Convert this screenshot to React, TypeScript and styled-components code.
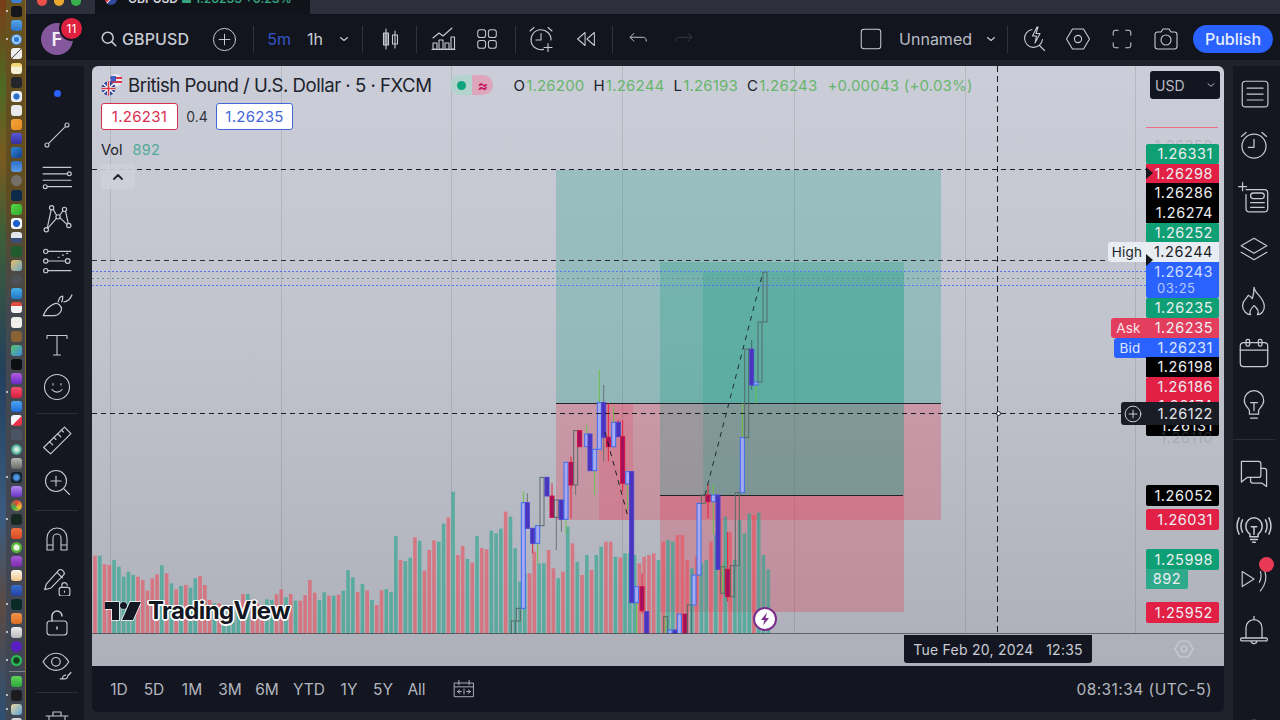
import React from "react";
import styled, { createGlobalStyle } from "styled-components";

const Global = createGlobalStyle`
  html, body {
    margin: 0;
    padding: 0;
    width: 1280px;
    height: 720px;
    overflow: hidden;
    background: #12151d;
    font-family: Inter, "Liberation Sans", sans-serif;
  }
`;

const Screen = styled.div`
  display: flex;
  width: 1280px;
  height: 720px;
  overflow: hidden;
`;

/* macOS dock on the left */
const Dock = styled.div`
  flex: 0 0 26px;
  height: 720px;
  overflow: hidden;
  display: flex;
  background: linear-gradient(180deg, #7a3d18 0%, #4d6a24 12%, #7a5a20 22%, #3f5f38 32%, #23405c 52%, #3b5c80 72%, #5b4a44 84%, #2d4f72 100%);
`;

const DockGlass = styled.div`
  margin-left: 6px;
  flex: 1;
  display: flex;
  flex-direction: column;
  align-items: center;
  gap: 3.12px;
  margin-top: -8px;
  padding-left: 2px;
  height: 740px;
  background: linear-gradient(180deg, #6a5120 0%, #5e4c22 28%, #45484f 42%, #3f4654 100%);
  border-right: 1px solid #8a6a2a;
`;

const DockIcon = styled.div<{ $bg: string; $round?: boolean; $dot?: boolean }>`
  position: relative;
  flex: 0 0 11px;
  width: 11px;
  border-radius: ${(p) => (p.$round ? "50%" : "3px")};
  background: ${(p) => p.$bg};

  &::before {
    content: "";
    display: ${(p) => (p.$dot ? "block" : "none")};
    position: absolute;
    left: -5px;
    top: 4px;
    width: 2px;
    height: 2px;
    border-radius: 50%;
    background: #e6e6e0;
  }
`;

const DockSep = styled.div`
  flex: 0 0 1px;
  width: 16px;
  margin: 1.3px 0;
  background: rgba(255, 255, 255, 0.35);
`;

const Desk = styled.div`
  flex: 1;
  min-width: 0;
  display: flex;
  flex-direction: column;
  background: #1f222b;
`;

/* browser tab strip, mostly cut off at the top */
const TabStrip = styled.div`
  flex: 0 0 14px;
  display: flex;
  background: #2d303b;
  overflow: hidden;
`;

const Lights = styled.div`
  flex: 0 0 69px;
  display: flex;
  gap: 7px;
  padding-left: 11px;
  margin-top: -4px;
  box-sizing: border-box;
`;

const Light = styled.span<{ $c: string }>`
  flex: none;
  width: 10px;
  height: 10px;
  border-radius: 50%;
  background: ${(p) => p.$c};
`;

const Tab = styled.div`
  flex: 0 0 215px;
  display: flex;
  gap: 11px;
  background: #10131a;
  color: #d6d8de;
  font-size: 12px;
  font-weight: 600;
  line-height: 12px;
  padding: 0 0 0 10px;
  box-sizing: border-box;
  height: 14px;
  white-space: nowrap;
`;

const TabFlag = styled.span`
  flex: none;
  width: 12px;
  height: 12px;
  margin-top: -7px;
  border-radius: 50%;
  background: linear-gradient(135deg, #d9364a 45%, #e8e8ee 50%, #2f4a9a 55%);
`;

const TabText = styled.span`
  margin-top: -7px;
`;

const TabGreen = styled.span`
  color: #35a47f;
`;

const Toolbar = styled.div`
  flex: 0 0 46px;
  box-sizing: border-box;
  display: flex;
  align-items: center;
  background: #12151d;
  padding: 4px 7px 0 15px;
  color: #c8cbd3;
`;

const Avatar = styled.div`
  position: relative;
  flex: 0 0 32px;
  height: 32px;
  border-radius: 50%;
  background: #84569b;
  color: #f4eef6;
  font-size: 19px;
  font-weight: 600;
  display: flex;
  align-items: center;
  justify-content: center;
`;

const Badge = styled.span`
  position: absolute;
  left: 18px;
  top: -7px;
  width: 25px;
  height: 25px;
  border-radius: 50%;
  border: 2px solid #12151d;
  box-sizing: border-box;
  background: #e0203f;
  color: #fff;
  font-size: 12px;
  font-weight: 400;
  display: flex;
  align-items: center;
  justify-content: center;
`;

const Search = styled.div`
  margin-left: 27px;
  display: flex;
  align-items: center;
  gap: 4px;
  font-size: 16px;
  font-weight: 500;
  letter-spacing: 0.1px;
`;

const Cell = styled.div<{ $w: number; $ml?: number }>`
  flex: 0 0 ${(p) => p.$w}px;
  margin-left: ${(p) => p.$ml || 0}px;
  height: 40px;
  display: flex;
  align-items: center;
  justify-content: center;
`;

const Interval = styled(Cell)<{ $active?: boolean }>`
  font-size: 16px;
  color: ${(p) => (p.$active ? "#3455c9" : "#c8cbd3")};
`;

const Divider = styled.div<{ $ml?: number }>`
  flex: 0 0 1px;
  height: 27px;
  margin-left: ${(p) => p.$ml || 0}px;
  background: #2f333e;
`;

const Grow = styled.div`
  flex: 1;
`;

const LayoutName = styled.span`
  flex: 0 0 72px;
  margin-left: 10px;
  font-size: 16px;
  color: #b9bcc5;
  white-space: nowrap;
`;

const Publish = styled.button`
  flex: 0 0 80px;
  height: 28px;
  margin-left: 5px;
  border: 0;
  padding: 0;
  border-radius: 14px;
  background: #2962ff;
  color: #e9eeff;
  font: 500 16px Inter, "Liberation Sans", sans-serif;
`;

const IconFaint = styled.span`
  color: #3a3e49;
`;

const Body = styled.div`
  flex: 1;
  min-height: 0;
  display: flex;
  margin-top: 6px;
  overflow: hidden;
`;

const LeftBar = styled.div`
  flex: 0 0 58px;
  margin-right: 8px;
  background: #141720;
  padding: 6px 0 0 4px;
  box-sizing: border-box;
  display: flex;
  flex-direction: column;
  align-items: center;
  color: #c6c9d1;
  overflow: hidden;
`;

const RightBar = styled.div`
  flex: 0 0 47px;
  margin-left: 9px;
  background: #141720;
  padding: 1px 5px 0 0;
  box-sizing: border-box;
  display: flex;
  flex-direction: column;
  align-items: center;
  color: #c6c9d1;
  overflow: hidden;
`;

const ToolCell = styled.div<{ $h: number }>`
  position: relative;
  flex: 0 0 ${(p) => p.$h}px;
  width: 100%;
  display: flex;
  align-items: center;
  justify-content: center;
`;

const BarSep = styled.div<{ $h: number }>`
  flex: 0 0 ${(p) => p.$h}px;
  width: 100%;
  display: flex;
  align-items: center;
  justify-content: center;

  &::after {
    content: "";
    width: 42px;
    height: 1px;
    background: #2a2e39;
  }
`;

const RecDot = styled.span`
  position: absolute;
  left: 26px;
  top: 5px;
  width: 15px;
  height: 15px;
  border-radius: 50%;
  background: #e83a57;
`;

const BlueDot = styled.span`
  width: 7px;
  height: 7px;
  border-radius: 50%;
  background: #2962ff;
`;

const Center = styled.div`
  flex: 0 0 1132px;
  display: flex;
  flex-direction: column;
`;

const Chart = styled.div`
  position: relative;
  flex: 0 0 600px;
  display: flex;
  flex-direction: column;
  border-radius: 6px 6px 0 0;
  overflow: hidden;
  background: linear-gradient(180deg, #cbced8 0%, #c1c4cd 45%, #adb0b9 100%);
`;

const Pane = styled.div`
  position: relative;
  flex: 0 0 568px;
`;

const PlotSvg = styled.svg`
  position: absolute;
  left: 0;
  top: 0;
  display: block;
`;

const TimeAxis = styled.div`
  position: relative;
  flex: 1;
`;

const TimeTag = styled.div`
  position: absolute;
  left: 812px;
  top: 1px;
  width: 188px;
  height: 28px;
  border-radius: 0 0 3px 3px;
  background: #131620;
  color: #c9ccd4;
  font-size: 14px;
  letter-spacing: 0.25px;
  white-space: pre;
  display: flex;
  align-items: center;
  justify-content: center;
`;

const AxisGear = styled.div`
  position: absolute;
  left: 1081px;
  top: 4px;
  color: #c8cbd2;
`;

const Legend = styled.div`
  position: absolute;
  left: 9px;
  top: 7px;
  display: flex;
  flex-direction: column;
`;

const TitleRow = styled.div`
  display: flex;
  align-items: center;
  height: 24px;
`;

const Title = styled.span`
  margin-left: 5px;
  font-size: 18.6px;
  letter-spacing: -0.5px;
  color: #20222c;
  white-space: nowrap;
`;

const Status = styled.div`
  margin-left: 19px;
  flex: 0 0 43px;
  height: 20px;
  display: flex;
  border-radius: 10px;
  overflow: hidden;
`;

const StatusHalf = styled.div<{ $bg: string; $c: string }>`
  flex: 1;
  display: flex;
  align-items: center;
  justify-content: center;
  background: ${(p) => p.$bg};
  color: ${(p) => p.$c};
  font-size: 15px;
  font-weight: 700;
`;

const StatusDot = styled.span`
  width: 9px;
  height: 9px;
  border-radius: 50%;
  background: #10a37f;
`;

const Ohlc = styled.div`
  margin-left: 20px;
  display: flex;
  gap: 9px;
  font-size: 15px;
  letter-spacing: 0.2px;
  color: #20222c;
  white-space: nowrap;
`;

const Num = styled.span`
  color: #68b56d;
  margin-left: 1px;
`;

const QuoteRow = styled.div`
  display: flex;
  align-items: center;
  margin-top: 6px;
  height: 27px;
`;

const QuoteBox = styled.div<{ $c: string }>`
  flex: 0 0 77px;
  height: 27px;
  box-sizing: border-box;
  border: 1px solid ${(p) => p.$c};
  border-radius: 3px;
  background: #fff;
  color: ${(p) => p.$c};
  font-size: 15px;
  letter-spacing: 0.3px;
  display: flex;
  align-items: center;
  justify-content: center;
`;

const Spread = styled.span`
  flex: 0 0 38px;
  text-align: center;
  font-size: 14px;
  color: #33353f;
`;

const VolRow = styled.div`
  display: flex;
  gap: 10px;
  margin-top: 11px;
  font-size: 14.5px;
  color: #20222c;
`;

const VolNum = styled.span`
  color: #52a99a;
  letter-spacing: 0.3px;
`;

const Collapse = styled.div`
  margin-top: 6px;
  width: 34px;
  height: 25px;
  display: flex;
  align-items: center;
  justify-content: center;
  border-radius: 3px;
  background: rgba(205, 208, 217, 0.9);
  color: #22242c;
`;

const CurrencySel = styled.div`
  position: absolute;
  left: 1058px;
  top: 5px;
  width: 70px;
  height: 28px;
  box-sizing: border-box;
  padding: 0 3px 0 5px;
  border-radius: 3px;
  background: #131620;
  color: #b9bcc5;
  font-size: 14px;
  display: flex;
  align-items: center;
  justify-content: space-between;
`;

const PinkLine = styled.div`
  position: absolute;
  left: 1054px;
  top: 61px;
  width: 72px;
  height: 1px;
  background: #ee6f86;
`;

const PriceTag = styled.div<{ $y: number; $bg: string; $c?: string; $h?: number; $r?: boolean }>`
  position: absolute;
  left: 1054px;
  top: ${(p) => p.$y - 66 - (p.$h || 20) / 2}px;
  width: 73px;
  height: ${(p) => p.$h || 20}px;
  box-sizing: border-box;
  padding-right: 6px;
  border-radius: ${(p) => (p.$r ? "2px" : "0")};
  background: ${(p) => p.$bg};
  color: ${(p) => p.$c || "#eceef1"};
  font-size: 14.5px;
  letter-spacing: 0.55px;
  line-height: ${(p) => p.$h || 20}px;
  text-align: right;
`;

const CountdownTag = styled(PriceTag)`
  line-height: 16px;
  padding-top: 2px;
  border-radius: 0 0 2px 2px;
`;

const Countdown = styled.div`
  text-align: left;
  padding-left: 11px;
  font-size: 13px;
  color: #b7c8fb;
`;

const VolTag = styled(PriceTag)`
  width: 42px;
  padding: 0;
  text-align: center;
  border-radius: 0 0 2px 0;
`;

const FaintPrice = styled.div<{ $y: number }>`
  position: absolute;
  left: 1054px;
  top: ${(p) => p.$y - 76}px;
  width: 67px;
  font-size: 14.5px;
  line-height: 20px;
  letter-spacing: 0.55px;
  text-align: right;
  color: rgba(120, 124, 135, 0.3);
`;

const SideTag = styled.div<{ $y: number; $w: number; $bg: string; $c: string }>`
  position: absolute;
  left: ${(p) => 1054 - p.$w}px;
  top: ${(p) => p.$y - 66 - 10}px;
  width: ${(p) => p.$w}px;
  height: 20px;
  border-radius: 3px 0 0 3px;
  background: ${(p) => p.$bg};
  color: ${(p) => p.$c};
  font-size: 13.5px;
  letter-spacing: 0.2px;
  display: flex;
  align-items: center;
  justify-content: center;
  z-index: 2;
`;

const PinMark = styled.div<{ $y: number }>`
  position: absolute;
  left: 1054px;
  top: ${(p) => p.$y - 66 - 6}px;
  width: 0;
  height: 0;
  border-top: 6px solid transparent;
  border-bottom: 6px solid transparent;
  border-left: 7px solid #14161c;
  z-index: 4;
`;

const CrossTag = styled.div`
  position: absolute;
  left: 1029px;
  top: 336px;
  width: 98px;
  height: 23px;
  box-sizing: border-box;
  padding: 0 6px 0 1px;
  border-radius: 3px 0 0 3px;
  background: #1a1d26;
  color: #e4e6ea;
  font-size: 14.5px;
  letter-spacing: 0.55px;
  display: flex;
  align-items: center;
  justify-content: space-between;
  z-index: 3;
`;

const LogoWrap = styled.div`
  position: absolute;
  left: 13px;
  top: 530px;
  display: flex;
  align-items: center;
  gap: 7px;
  color: #131722;
`;

const LogoText = styled.span`
  font-size: 24px;
  font-weight: 700;
  letter-spacing: -0.6px;
  text-shadow: 1.5px 0 #fff, -1.5px 0 #fff, 0 1.5px #fff, 0 -1.5px #fff, 1.2px 1.2px #fff, -1.2px -1.2px #fff, 1.2px -1.2px #fff, -1.2px 1.2px #fff;
`;

const BoltBadge = styled.div`
  position: absolute;
  left: 661px;
  top: 541px;
  width: 24px;
  height: 24px;
  box-sizing: border-box;
  border-radius: 50%;
  background: #fff;
  border: 2px solid #7b2d8b;
  display: flex;
  align-items: center;
  justify-content: center;
  color: #7b2d8b;
`;

const BottomBar = styled.div`
  flex: 0 0 46px;
  display: flex;
  align-items: center;
  border-radius: 0 0 6px 6px;
  background: #131620;
  color: #b2b5be;
  font-size: 15.5px;
  padding: 0 12px 0 0;
`;

const Range = styled.span<{ $w: number }>`
  flex: 0 0 ${(p) => p.$w}px;
  text-align: center;
`;

const ClockText = styled.span`
  font-size: 15.5px;
  letter-spacing: 0.45px;
  white-space: nowrap;
`;

const IconSvg = styled.svg`
  display: block;
  flex: none;
  fill: none;
  stroke: currentColor;
  stroke-width: 1.1;
  stroke-linecap: round;
  stroke-linejoin: round;
`;

const I: React.FC<{ s?: number; children: React.ReactNode }> = ({ s = 28, children }) => (
  <IconSvg width={s} height={s} viewBox="0 0 28 28">
    {children}
  </IconSvg>
);

const Chevron = ({ s = 14 }: { s?: number }) => (
  <IconSvg width={s} height={s} viewBox="0 0 14 14">
    <path d="M3.5 5.5 7 8.5l3.5-3" />
  </IconSvg>
);

const Flags = () => (
  <svg width="22" height="24" viewBox="0 0 22 24">
    <circle cx="14.5" cy="7.5" r="6.5" fill="#e8e8ee" />
    <path d="M9 4h12v2H9zM8 8h13v2H8z" fill="#d9364a" />
    <path d="M9.5 3h5.5v5.5H9.5z" fill="#3e5fc4" />
    <circle cx="7.5" cy="15.5" r="7" fill="#2f4a9a" />
    <path d="M2 10.5 13 20.5M13 10.5 2 20.5" stroke="#f1f1f5" strokeWidth="1.6" />
    <path d="M7.5 8.5v14M.5 15.5h14" stroke="#f1f1f5" strokeWidth="3" />
    <path d="M7.5 8.5v14M.5 15.5h14" stroke="#d9364a" strokeWidth="1.5" />
  </svg>
);

const parseVols = (src: string, base: number) =>
  src.split(" ").map((t) => ({ red: t[0] === "r", top: base + Number(t.slice(1)) / 3 }));

const VOLUMES = [
  ...parseVols(
    "r287 g287 r313 r315 g300 g320 g350 g335 g345 r350 r360 r392 r355 r343 g316 r340 g370 r388 g378 r375 g383 g355 r348 r375 r420 g430 r430 g440 g440 g440 g440 r402 g402 r430 r430 r440 g418 g420 r403 r388 g412",
    460
  ),
  ...parseVols(
    "r342 g362 r362 r345 r300 r338 g360 g337 r347 g347 r344 g332 g270 g292 r336 g312 r331 g360 r375 r331 g328 g336 g168 r240 g243 g233 r172 g182 r272 r210 r181 g185 g131 r112 g35 r225 r198 g237 r248 g168 r204 r208 g152 g160 g146",
    480
  ),
  ...parseVols(
    "r455 g470 g565 g665 g640 r640 r575 g610 g610 r570 r625 g655 r635 g500 r550 g605 r645 g585 r630 g585 g560 r545 r545 g590 r592 g580 g580 g585 r610 r590 r585 r580 g600 r545 g540 g545 r525 r525 r600 g625 r590 g610 g600 r545 g525 r475 g470 r515 g600 g480 g520 g460 r465 g458 g585 g628",
    360
  ),
];

type Kind = "h" | "p" | "m" | "g";
type Candle = [number, number, number, Kind, number?, number?, string?];

const WG = "#6cc04a";
const WR = "#e8203f";
const WK = "#6e7378";

// coordinates are measured on a 3x crop whose origin is x=490 y=360
const CANDLES: Candle[] = [
  [70, 783, 830, "g"], [85, 745, 783, "g"], [100, 428, 745, "h", 395, 428, WG], [112, 428, 505, "p", 400, 428, WK],
  [128, 505, 550, "p", 505, 580, WR], [143, 497, 550, "h", 550, 610, WG], [156, 352, 497, "g"], [171, 352, 408, "p"],
  [186, 408, 472, "m", 370, 408, WR], [199, 420, 472, "g", 472, 570, WK], [214, 420, 478, "p", 478, 515, WK],
  [228, 307, 478, "h", 478, 520, WG], [243, 307, 375, "m", 290, 475, WR], [257, 212, 375, "g", 375, 405, WK],
  [269, 212, 260, "m"], [290, 222, 260, "h", 195, 222, WG], [300, 222, 332, "p"], [314, 268, 332, "h", 332, 405, WG],
  [328, 128, 268, "h", 30, 128, WG], [341, 128, 232, "p", 75, 305, WK], [355, 232, 260, "m", 130, 305, WR],
  [371, 187, 260, "h", 140, 187, WG], [385, 187, 230, "p", 180, 187, WR], [398, 230, 370, "m", 180, 395, WR],
  [413, 335, 372, "h", 372, 450, WG], [425, 335, 728, "p"], [440, 680, 728, "h", 728, 830, WG],
  [456, 680, 752, "m", 640, 760, WR], [470, 755, 830, "p"], [527, 770, 830, "g", 765, 830, WG], [540, 810, 830, "h"], [555, 810, 830, "p"],
  [568, 762, 830, "h"], [585, 762, 830, "m"], [598, 735, 830, "g"], [612, 645, 735, "h"], [627, 430, 645, "h"],
  [640, 405, 430, "g"], [654, 405, 425, "m", 372, 475, WR], [670, 405, 425, "h", 372, 525, WG], [684, 405, 628, "p"],
  [698, 620, 700, "g", 610, 700, WG], [713, 628, 710, "m", 515, 725, WR], [727, 617, 710, "g"], [742, 398, 617, "g"],
  [757, 233, 398, "h", 130, 233, WG], [770, -33, 233, "g"], [785, -33, 75, "p", -60, 90, "#3a6d66"],
  [798, 66, 75, "h", 75, 130, WG], [810, -114, 66, "g"], [825, -264, -114, "g"],
];

const CANDLE_STYLE: Record<Kind, { fill: string; stroke: string }> = {
  h: { fill: "#a6abef", stroke: "#3f6bf0" },
  p: { fill: "#4a33bd", stroke: "#4a45d0" },
  m: { fill: "#a0115f", stroke: "#d8103f" },
  g: { fill: "none", stroke: "#566b68" },
};

const GRID = [110, 281, 451, 622, 794, 965, 1135];

const Plot = () => (
  <PlotSvg width="1132" height="568" viewBox="92 66 1132 568">
    {GRID.map((x) => (
      <line key={x} x1={x + 0.5} x2={x + 0.5} y1="66" y2="634" stroke="#000" strokeOpacity=".1" />
    ))}

    <rect x="556" y="170" width="385" height="234" fill="rgba(8,153,129,.24)" />
    <rect x="556" y="404" width="385" height="116" fill="rgba(233,50,80,.28)" />
    <rect x="660" y="262" width="244" height="233" fill="rgba(8,153,129,.24)" />
    <rect x="660" y="495" width="244" height="117" fill="rgba(233,50,80,.28)" />
    <rect x="703" y="272" width="201" height="223" fill="rgba(8,153,129,.18)" />
    <rect x="599" y="404" width="34" height="116" fill="rgba(233,50,80,.2)" />

    {VOLUMES.map((v, i) => (
      <rect
        key={i}
        x={93.2 + 4.775 * i}
        y={v.top}
        width="3.6"
        height={634 - v.top}
        fill={v.red ? "rgba(238,74,86,.58)" : "rgba(50,165,145,.68)"}
      />
    ))}

    <line x1="556" x2="941" y1="403.5" y2="403.5" stroke="#22242a" strokeWidth="1.2" />
    <line x1="660" x2="903" y1="495.5" y2="495.5" stroke="#22242a" strokeWidth="1.2" />

    {CANDLES.map(([zx, top, bot, kind, wt, wb, wc], i) => {
      const x = 490 + zx / 3;
      const st = CANDLE_STYLE[kind];
      return (
        <g key={i}>
          {wt !== undefined && (
            <line x1={x} x2={x} y1={360 + wt / 3} y2={360 + (wb as number) / 3} stroke={wc} strokeWidth="1" />
          )}
          <rect x={x - 2} y={360 + top / 3} width="4" height={(bot - top) / 3} fill={st.fill} stroke={st.stroke} strokeWidth="1" />
        </g>
      );
    })}

    <line x1="92" x2="1146" y1="169.5" y2="169.5" stroke="#1b1d24" strokeDasharray="5 4" />
    <line x1="92" x2="1146" y1="260.5" y2="260.5" stroke="#2c3036" strokeDasharray="5 4" />
    <g strokeLinecap="butt" shapeRendering="crispEdges">
      <line x1="92" x2="1146" y1="271.5" y2="271.5" stroke="#4d78f5" strokeDasharray="2 2" />
      <line x1="92" x2="1146" y1="278.5" y2="278.5" stroke="#6f8a90" strokeDasharray="2 3" />
      <line x1="92" x2="1146" y1="285.5" y2="285.5" stroke="#4d78f5" strokeDasharray="2 2" />
    </g>
    <line x1="92" x2="1125" y1="413.5" y2="413.5" stroke="#1b1d24" strokeDasharray="5 4" />
    <line x1="997.5" x2="997.5" y1="66" y2="634" stroke="#1b1d24" strokeDasharray="6 4" />
    <line x1="605" x2="628" y1="432" y2="517" stroke="#1b1d24" strokeDasharray="5 5" />
    <line x1="705" x2="763" y1="495" y2="272" stroke="#1b3030" strokeDasharray="5 5" />
    <circle cx="998.5" cy="413.5" r="2" fill="#fff" stroke="#1b1d24" />
    <line x1="92" x2="1224" y1="634" y2="634" stroke="#43464e" strokeWidth="1.6" />
  </PlotSvg>
);

const DOCK: { bg: string; round?: boolean; dot?: boolean }[] = [
  { bg: "#3a7fd0" }, { bg: "#16171c", dot: true }, { bg: "linear-gradient(#56a6ea,#2f72c4)" },
  { bg: "radial-gradient(#2d7fd8 35%,#cfe3f5 40%,#2d7fd8 70%)", round: true, dot: true }, { bg: "linear-gradient(135deg,#eee 45%,#555 50%,#eee 55%)" },
  { bg: "linear-gradient(#f2d774 30%,#f5efd5 35%)" }, { bg: "#24262b" }, { bg: "radial-gradient(#2b6fc4 35%,#e6eef7 45%)" },
  { bg: "#e9e9ec" }, { bg: "linear-gradient(135deg,#f0a53a,#e68a22)" }, { bg: "linear-gradient(#5a57d8,#34309a)" },
  { bg: "linear-gradient(135deg,#2f8bd9,#143d8c)" }, { bg: "linear-gradient(#2f6ec9,#5b9be6)" }, { bg: "#75716a", round: true },
  { bg: "#0c2a4a" }, { bg: "linear-gradient(135deg,#5ad84a,#2fa82a)" }, { bg: "radial-gradient(#1e5fd0 40%,#f4f6fb 50%)" },
  { bg: "linear-gradient(#e4e6ee 50%,#3a4d74 55%)" }, { bg: "#1f5b2c" }, { bg: "linear-gradient(135deg,#e9c16a,#68a7c8)" },
  { bg: "#4d5056", round: true }, { bg: "linear-gradient(#45aee8,#2378c4)" }, { bg: "linear-gradient(#e04a3f 35%,#f4f4f4 40%)" },
  { bg: "#f0efeb" }, { bg: "#8a6332" }, { bg: "linear-gradient(135deg,#5cc56a,#3c8be0)" },
  { bg: "#0e0f12" }, { bg: "linear-gradient(#b35be0,#6a2bc4)" }, { bg: "linear-gradient(#f8506c,#d91f3e)", dot: true },
  { bg: "linear-gradient(#4ca6f2,#1e69d8)" }, { bg: "linear-gradient(135deg,#f5f5f5 50%,#e8344a 55%)" }, { bg: "#4c5564" },
  { bg: "radial-gradient(#cfeee2 20%,#2f8f7a 70%)", round: true }, { bg: "linear-gradient(#b8b8b4,#6a6a66)" }, { bg: "radial-gradient(#4a94e0 30%,#14202e 60%)", dot: true },
  { bg: "linear-gradient(#b488ee,#6a35c8)" }, { bg: "conic-gradient(#e04438,#f0c030,#3ca850,#e04438)", round: true }, { bg: "#16281f", dot: true },
  { bg: "linear-gradient(#f07040,#d94a24)" }, { bg: "radial-gradient(#e9f6df 30%,#58b038 50%)", round: true }, { bg: "linear-gradient(#a858d8,#7a2ca8)" },
  { bg: "linear-gradient(#fbf6ec,#f2c68a)" }, { bg: "linear-gradient(#3a6fd0,#2440a0)" }, { bg: "#0a2a28", dot: true },
  { bg: "linear-gradient(#f0954a,#dc6e24)" }, { bg: "linear-gradient(#eee,#bbb)", dot: true }, { bg: "#5a1fc0", round: true },
  { bg: "radial-gradient(#143d20 30%,#2bc25a 55%)", round: true, dot: true },
];

const DOCK_TAIL: { bg: string; round?: boolean; dot?: boolean }[] = [
  { bg: "linear-gradient(#5fd35a,#2fa83a)" }, { bg: "#1c1c1e", dot: true },
  { bg: "linear-gradient(135deg,#e9d9a0,#5da0d8)", dot: true }, { bg: "#d8d8dc" },
];

const App = () => (
  <Screen>
    <Global />
    <Dock>
      <DockGlass>
        {DOCK.map((d, i) => (
          <DockIcon key={i} $bg={d.bg} $round={d.round} $dot={d.dot} />
        ))}
        <DockSep />
        {DOCK_TAIL.map((d, i) => (
          <DockIcon key={i} $bg={d.bg} $round={d.round} $dot={d.dot} />
        ))}
      </DockGlass>
    </Dock>

    <Desk>
      <TabStrip>
        <Lights>
          <Light $c="#e9514a" />
          <Light $c="#e8a72f" />
          <Light $c="#35b34a" />
        </Lights>
        <Tab>
          <TabFlag />
          <TabText>
            GBPUSD <TabGreen>■ 1.26233 +0.23%</TabGreen>
          </TabText>
        </Tab>
      </TabStrip>

      <Toolbar>
        <Avatar>
          F<Badge>11</Badge>
        </Avatar>
        <Search>
          <I s={18}>
            <circle cx="12" cy="12" r="8.5" strokeWidth="2.4" />
            <path d="m18.5 18.5 6 6" strokeWidth="2.4" />
          </I>
          GBPUSD
        </Search>
        <Cell $w={24} $ml={23}>
          <I s={25}>
            <circle cx="14" cy="14" r="12.4" />
            <path d="M14 8v12M8 14h12" />
          </I>
        </Cell>
        <Divider $ml={16} />
        <Interval $w={50} $active>5m</Interval>
        <Interval $w={22}>1h</Interval>
        <Cell $w={36}><Chevron /></Cell>
        <Divider />
        <Cell $w={53}>
          <I>
            <path d="M10 4v20M19 6v17" />
            <rect x="7.5" y="8" width="5" height="12" fill="currentColor" fillOpacity=".55" />
            <rect x="16.5" y="10" width="5" height="9" />
          </I>
        </Cell>
        <Divider />
        <Cell $w={52}>
          <I>
            <path d="m4 13 6-5 4 3 9-8" />
            <path d="M4 24v-6h4v6zM10 24v-9h4v9zM16 24v-6h4v6zM22 24V12h3.5v12zM3 24.5h23" />
          </I>
        </Cell>
        <Cell $w={36}>
          <I s={26}>
            <rect x="4" y="4" width="8.5" height="8.5" rx="2.5" />
            <rect x="15.5" y="4" width="8.5" height="8.5" rx="2.5" />
            <rect x="4" y="15.5" width="8.5" height="8.5" rx="2.5" />
            <rect x="15.5" y="15.5" width="8.5" height="8.5" rx="2.5" />
          </I>
        </Cell>
        <Divider $ml={10} />
        <Cell $w={50}>
          <I>
            <path d="M16.5 24.4A10 10 0 1 1 24 15" />
            <path d="M14 8.5v6.5H9M3 6l4-3.5M25 6l-4-3.5M21 18.5v8M17 22.5h8" />
          </I>
        </Cell>
        <Cell $w={40}>
          <I s={26}>
            <path d="M13 7 5 14l8 7zM23 7l-8 7 8 7z" />
          </I>
        </Cell>
        <Divider $ml={6} />
        <Cell $w={52}>
          <I s={24}>
            <path d="M8 7.5 3.5 12 8 16.5M4 12h15c2.5 0 3.5 2 3.5 4.5" />
          </I>
        </Cell>
        <Cell $w={36}>
          <IconFaint>
            <I s={24}>
              <path d="M20 7.5 24.5 12 20 16.5M24 12H9c-2.5 0-3.5 2-3.5 4.5" />
            </I>
          </IconFaint>
        </Cell>
        <Grow />
        <Cell $w={36}>
          <I s={26}>
            <rect x="3.5" y="3.5" width="21" height="21" rx="3" />
          </I>
        </Cell>
        <LayoutName>Unnamed</LayoutName>
        <Cell $w={32} $ml={3}><Chevron /></Cell>
        <Divider />
        <Cell $w={44} $ml={4}>
          <I>
            <path d="M22.5 14.5A9 9 0 1 1 12 4.5M19.5 20.5l5 5" />
            <path d="m17 2-4.5 9h4l-1.5 7 5-9.5h-4L18 2z" />
          </I>
        </Cell>
        <Cell $w={44}>
          <I>
            <path d="M8.5 4h11L25.5 14l-6 10h-11L2.5 14z" />
            <circle cx="14" cy="14" r="3.6" />
          </I>
        </Cell>
        <Cell $w={44}>
          <I s={26}>
            <path d="M10 4.5H7A2.5 2.5 0 0 0 4.5 7v3M18 4.5h3A2.5 2.5 0 0 1 23.5 7v3M10 23.5H7A2.5 2.5 0 0 1 4.5 21v-3M18 23.5h3a2.5 2.5 0 0 0 2.5-2.5v-3" />
          </I>
        </Cell>
        <Cell $w={44}>
          <I>
            <path d="M3 9.5A2.5 2.5 0 0 1 5.5 7H9l2-3h6l2 3h3.5A2.5 2.5 0 0 1 25 9.5v12A2.5 2.5 0 0 1 22.5 24h-17A2.5 2.5 0 0 1 3 21.5z" />
            <circle cx="14" cy="15" r="5" />
          </I>
        </Cell>
        <Publish>Publish</Publish>
      </Toolbar>

      <Body>
        <LeftBar>
          <ToolCell $h={42}><BlueDot /></ToolCell>
          <ToolCell $h={42}>
            <I>
              <circle cx="24" cy="4" r="2" />
              <circle cx="4" cy="24" r="2" />
              <path d="M22.6 5.4 5.4 22.6" />
            </I>
          </ToolCell>
          <ToolCell $h={42}>
            <I s={30}>
              <path d="M1 5h26M1 11h23M1 17h26M5 23h23" />
              <circle cx="25.5" cy="11" r="1.8" />
              <circle cx="3" cy="23" r="1.8" />
            </I>
          </ToolCell>
          <ToolCell $h={42}>
            <I s={30}>
              <circle cx="9" cy="3.5" r="2" />
              <circle cx="21" cy="5" r="2" />
              <circle cx="15" cy="12" r="2" />
              <circle cx="4" cy="24" r="2" />
              <circle cx="25" cy="20" r="2" />
              <path d="M8.5 5.5 5 22M10.5 5l3 5.5M16.5 10.5l3-4M22 7l2.5 11M5.5 22.5l8-9M16.8 13l6.5 6" />
            </I>
          </ToolCell>
          <ToolCell $h={42}>
            <I s={30}>
              <path d="M6 5h21M6 14h15M6 23h21" />
              <circle cx="3.5" cy="5" r="2" />
              <circle cx="3.5" cy="14" r="2" />
              <circle cx="3.5" cy="23" r="2" />
              <circle cx="24" cy="14" r="2.2" />
              <path d="M15 10.5h1M19 8.5h1M23 6.8h1" />
            </I>
          </ToolCell>
          <ToolCell $h={42}>
            <I s={32}>
              <path d="M2 25h10c3 0 6-3 6-6 0-1.5-1-2.5-2-3.5s-2.5-1.5-4-1C8 16 4 20 2 25z" />
              <path d="M15 13c1-4 3-5 4-5 0 2 0 4-1 5M20 13c3 0 6-3 7-6" />
            </I>
          </ToolCell>
          <ToolCell $h={42}>
            <I>
              <path d="M4 7.5V4.5h20v3M14 4.5V24M10.5 24h7" />
            </I>
          </ToolCell>
          <ToolCell $h={42}>
            <I>
              <circle cx="14" cy="14" r="12.5" />
              <path d="M9 16.5c2.5 3.5 7.5 3.5 10 0M10 10.5v1.5M18 10.5v1.5" />
            </I>
          </ToolCell>
          <BarSep $h={11} />
          <ToolCell $h={42}>
            <I s={30}>
              <path d="M1.5 21 21 2l6 6L8 27z" />
              <path d="M7 15.5l3 3M11 11.5l2 2M14.5 8l3 3M18 4.5l2 2" />
            </I>
          </ToolCell>
          <ToolCell $h={42}>
            <I>
              <circle cx="13" cy="13" r="10.5" />
              <path d="M13 8v10M8 13h10M21 21l5.5 5.5" />
            </I>
          </ToolCell>
          <BarSep $h={15} />
          <ToolCell $h={42}>
            <I>
              <path d="M4 25v-12a10 10 0 0 1 20 0v12h-6v-12a4 4 0 0 0-8 0v12zM4 20h6M18 20h6" />
            </I>
          </ToolCell>
          <ToolCell $h={42}>
            <I s={30}>
              <path d="M4 17 15.5 4c1-1 2.5-1 3.5 0l1 1c1 1 1 2.5 0 3.5L8.5 20.5 2.5 22zM14 6l5 5" />
              <rect x="16" y="20" width="10" height="8" rx="2" />
              <path d="M18.5 20v-2a2.5 2.5 0 0 1 5 0M21 23.5v1" />
            </I>
          </ToolCell>
          <ToolCell $h={42}>
            <I>
              <rect x="4" y="12" width="20" height="14" rx="3" />
              <path d="M9 12V7a5 5 0 0 1 10 0M14 18v2" strokeWidth="1.5" />
            </I>
          </ToolCell>
          <ToolCell $h={42}>
            <I s={30}>
              <path d="M1 11c3-5 7.5-8 12-8s9 3 12 8c-3 5-7.5 8-12 8S4 16 1 11z" />
              <circle cx="13" cy="11" r="4" />
              <path d="M17 27h4c2 0 3-1.5 3-3l2-1.5M19 27c0-2 1.5-3.5 3-3.5M24 24l3-3" />
            </I>
          </ToolCell>
          <BarSep $h={12} />
          <ToolCell $h={42}>
            <I>
              <path d="M3 11h22M6 11v14h16V11M10 11V7h8v4" />
            </I>
          </ToolCell>
        </LeftBar>

        <Center>
          <Chart>
            <Pane>
              <Plot />
              <Legend>
                <TitleRow>
                  <Flags />
                  <Title>British Pound / U.S. Dollar · 5 · FXCM</Title>
                  <Status>
                    <StatusHalf $bg="#b3d4ce" $c="#10a37f"><StatusDot /></StatusHalf>
                    <StatusHalf $bg="#dda6bd" $c="#c2185b">≈</StatusHalf>
                  </Status>
                  <Ohlc>
                    <span>O<Num>1.26200</Num></span>
                    <span>H<Num>1.26244</Num></span>
                    <span>L<Num>1.26193</Num></span>
                    <span>C<Num>1.26243</Num></span>
                    <Num>+0.00043 (+0.03%)</Num>
                  </Ohlc>
                </TitleRow>
                <QuoteRow>
                  <QuoteBox $c="#d9304f">1.26231</QuoteBox>
                  <Spread>0.4</Spread>
                  <QuoteBox $c="#4466d8">1.26235</QuoteBox>
                </QuoteRow>
                <VolRow>
                  Vol <VolNum>892</VolNum>
                </VolRow>
                <Collapse>
                  <IconSvg width="14" height="14" viewBox="0 0 14 14">
                    <path d="M3 9l4-4 4 4" strokeWidth="1.8" />
                  </IconSvg>
                </Collapse>
              </Legend>

              <CurrencySel>
                USD
                <Chevron s={12} />
              </CurrencySel>
              <PinkLine />

              <FaintPrice $y={146}>1.26358</FaintPrice>
              <PriceTag $y={154} $bg="#0e9f74" $r>1.26331</PriceTag>
              <PriceTag $y={173.5} $bg="#e21f44">1.26298</PriceTag>
              <PriceTag $y={193} $bg="#000">1.26286</PriceTag>
              <PriceTag $y={213} $bg="#000">1.26274</PriceTag>
              <PriceTag $y={232.5} $bg="#0e9f74" $r>1.26252</PriceTag>
              <SideTag $y={252} $w={38} $bg="#e8edf3" $c="#1c1e26">High</SideTag>
              <PriceTag $y={252} $bg="#e8edf3" $c="#1c1e26">1.26244</PriceTag>
              <CountdownTag $y={280} $h={36} $bg="#2962ff" $c="#cfdcff">
                1.26243
                <Countdown>03:25</Countdown>
              </CountdownTag>
              <PriceTag $y={308} $bg="#0e9f74" $r>1.26235</PriceTag>
              <SideTag $y={327.5} $w={35} $bg="#e43e5e" $c="#fbe4e9">Ask</SideTag>
              <PriceTag $y={327.5} $bg="#e43e5e">1.26235</PriceTag>
              <SideTag $y={347.5} $w={32} $bg="#2962ff" $c="#dfe7ff">Bid</SideTag>
              <PriceTag $y={347.5} $bg="#2962ff" $c="#dfe7ff">1.26231</PriceTag>
              <PriceTag $y={367} $bg="#000">1.26198</PriceTag>
              <PriceTag $y={386.5} $bg="#e21f44" $r>1.26186</PriceTag>
              <PriceTag $y={406} $bg="#e21f44">1.26174</PriceTag>
              <PriceTag $y={426} $bg="#000" $r>1.26131</PriceTag>
              <FaintPrice $y={438}>1.26110</FaintPrice>
              <CrossTag>
                <I s={22}>
                  <circle cx="14" cy="14" r="10" />
                  <path d="M14 9v10M9 14h10" />
                </I>
                1.26122
              </CrossTag>
              <PriceTag $y={495.5} $h={21} $bg="#000" $r>1.26052</PriceTag>
              <PriceTag $y={519.5} $h={21} $bg="#e21f44" $r>1.26031</PriceTag>
              <PriceTag $y={559} $h={21} $bg="#0e9f74" $r>1.25998</PriceTag>
              <VolTag $y={578.5} $bg="#2fa98c">892</VolTag>
              <PriceTag $y={612} $h={21} $bg="#e21f44" $r>1.25952</PriceTag>
              <PinMark $y={173} />
              <PinMark $y={260} />

              <LogoWrap>
                <svg width="36" height="20" viewBox="0 0 36 20">
                  <path
                    d="M0 1h14v18H7V8H0zM25 1h11l-8 18H17z"
                    fill="#131722"
                    stroke="#fff"
                    strokeWidth="1.5"
                    paintOrder="stroke"
                  />
                  <circle cx="18.5" cy="4.5" r="3.5" fill="#131722" stroke="#fff" strokeWidth="1" paintOrder="stroke" />
                </svg>
                <LogoText>TradingView</LogoText>
              </LogoWrap>
              <BoltBadge>
                <svg width="12" height="14" viewBox="0 0 12 14">
                  <path d="M8 .5 2 8h3.5L4 13.5 10 6H6.5z" fill="currentColor" />
                </svg>
              </BoltBadge>
            </Pane>
            <TimeAxis>
              <TimeTag>Tue Feb 20, 2024   12:35</TimeTag>
              <AxisGear>
                <I s={22}>
                  <path d="M8.5 4h11L25.5 14l-6 10h-11L2.5 14z" strokeWidth="1.6" />
                  <circle cx="14" cy="14" r="3.6" strokeWidth="1.6" />
                </I>
              </AxisGear>
            </TimeAxis>
          </Chart>
          <BottomBar>
            <Range $w={10} />
            <Range $w={34}>1D</Range>
            <Range $w={36}>5D</Range>
            <Range $w={40}>1M</Range>
            <Range $w={36}>3M</Range>
            <Range $w={38}>6M</Range>
            <Range $w={46}>YTD</Range>
            <Range $w={34}>1Y</Range>
            <Range $w={34}>5Y</Range>
            <Range $w={33}>All</Range>
            <Cell $w={24} $ml={19}>
              <I s={24}>
                <path d="M3 7h22v16H3zM3 11.5h22M8 4v5M20 4v5M11 17H6.5M17 17h4.5M9 15l-2.5 2 2.5 2M19 15l2.5 2-2.5 2M14 14v6" />
              </I>
            </Cell>
            <Grow />
            <ClockText>08:31:34 (UTC-5)</ClockText>
          </BottomBar>
        </Center>

        <RightBar>
          <ToolCell $h={52}>
            <I s={30}>
              <rect x="3" y="3" width="24" height="24" rx="3" />
              <path d="M7.5 9.5h15M7.5 15h15M7.5 20.5h15" />
            </I>
          </ToolCell>
          <ToolCell $h={52}>
            <I s={32}>
              <circle cx="14" cy="15" r="10.5" />
              <path d="M14 9v7H9M3 6.5l4-3.5M25 6.5 21 3" />
            </I>
          </ToolCell>
          <ToolCell $h={52}>
            <I s={32}>
              <path d="M7 7.5H23a3 3 0 0 1 3 3V24a3 3 0 0 1-3 3H10a3 3 0 0 1-3-3V12" />
              <rect x="11" y="10.5" width="12" height="5" rx="2.5" />
              <path d="M11 19h12M11 23h12M4 1.5v7M.5 5h7" />
            </I>
          </ToolCell>
          <ToolCell $h={52}>
            <I s={30}>
              <path d="M14 4 26 11l-12 7L2 11zM2 17l12 7 12-7" />
            </I>
          </ToolCell>
          <ToolCell $h={52}>
            <I s={32}>
              <path d="M14 2c1 6 8 8 9 16 .5 5-3 8-6 8 1.5-2 1-4.5-3-8-3 3-4.5 6-3 8-3 0-7-3-7-8 0-5 4-6 5-9 2 1 3 2 3.5 3C14 8 14 5 14 2z" />
            </I>
          </ToolCell>
          <ToolCell $h={52}>
            <I s={32}>
              <rect x="2" y="5" width="24" height="21" rx="3" />
              <path d="M2 11.5h24" />
              <rect x="7" y="2" width="3.2" height="6" rx="1.5" />
              <rect x="17.8" y="2" width="3.2" height="6" rx="1.5" />
            </I>
          </ToolCell>
          <ToolCell $h={52}>
            <I s={32}>
              <path d="M10 22v-3c0-2-4.5-4-4.5-9a8.5 8.5 0 0 1 17 0c0 5-4.5 7-4.5 9v3zM11 25.5h6M14 19v-7M11 12h6" />
            </I>
          </ToolCell>
          <BarSep $h={17} />
          <ToolCell $h={52}>
            <I s={32}>
              <path d="M3 3h15a2 2 0 0 1 2 2v10a2 2 0 0 1-2 2H8l-5 4z" />
              <path d="M20 9h3a2 2 0 0 1 2 2v14l-4-3H13a2 2 0 0 1-2-2v-3" />
            </I>
          </ToolCell>
          <ToolCell $h={52}>
            <I s={38}>
              <path d="M11 20c-2.5-2-3-4-3-6a6 6 0 0 1 12 0c0 2-.5 4-3 6v2h-6zM11.5 24h5M13 26h2M14 20v-5M12 14.5h4" />
              <path d="M5.5 9.5c-1.5 3-1.5 6 0 9M3 8c-2 4-2 8 0 12M22.5 9.5c1.5 3 1.5 6 0 9M25 8c2 4 2 8 0 12" />
            </I>
          </ToolCell>
          <ToolCell $h={52}>
            <I s={30}>
              <path d="M3 8l11 7-11 7z" />
              <path d="M20 8c1 3 1 6-1 10M24 7c2 6 1 13-4 19" />
            </I>
            <RecDot />
          </ToolCell>
          <ToolCell $h={52}>
            <I s={32}>
              <path d="M7 21V12a7 7 0 0 1 14 0v9M3.5 21h21a1 1 0 0 1 0 2.5h-21a1 1 0 0 1 0-2.5zM11.5 23.5a2.5 2.5 0 0 0 5 0M14 2v3" />
            </I>
          </ToolCell>
          <ToolCell $h={52} />
          <ToolCell $h={52}>
            <I s={32}>
              <circle cx="14" cy="14" r="12" />
            </I>
          </ToolCell>
        </RightBar>
      </Body>
    </Desk>
  </Screen>
);

export default App;
